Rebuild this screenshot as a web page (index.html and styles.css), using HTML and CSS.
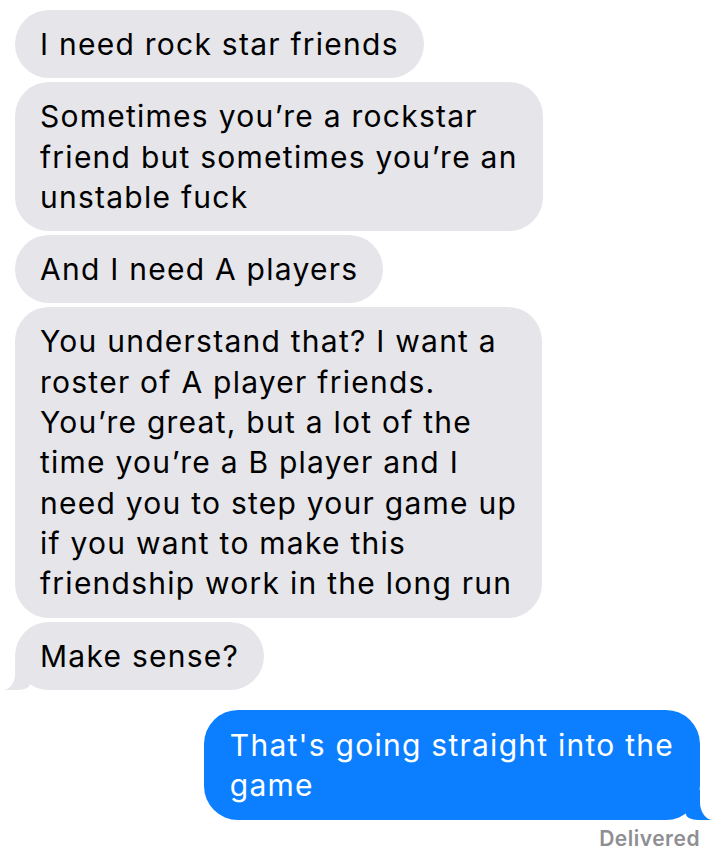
FILE: index.html
```html
<!DOCTYPE html>
<html>
<head>
<meta charset="utf-8">
<link rel="stylesheet" href="styles.css">
</head>
<body>
<div class="thread">
  <div class="bubble recv">I need rock star friends</div>
  <div class="bubble recv">Sometimes you’re a rockstar<br>friend but sometimes you’re an<br>unstable fuck</div>
  <div class="bubble recv">And I need A players</div>
  <div class="bubble recv">You understand that? I want a<br>roster of A player friends.<br>You’re great, but a lot of the<br>time you’re a B player and I<br>need you to step your game up<br>if you want to make this<br>friendship work in the long run</div>
  <div class="bubble recv tail">Make sense?</div>
  <div class="bubble sent tail">That's going straight into the<br>game</div>
  <div class="status">Delivered</div>
</div>
</body>
</html>
```
FILE: styles.css
```css
html, body {
  margin: 0;
  padding: 0;
  background: #ffffff;
}
.thread {
  display: flex;
  flex-direction: column;
  align-items: flex-start;
  gap: 4px;
  padding: 10px 16px 0 15px;
  font-family: "Inter", "Roboto", sans-serif;
}
.bubble {
  position: relative;
  z-index: 0;
  font-size: 30px;
  line-height: 40.3px;
  padding: 14px 25px;
  border-radius: 34px;
  white-space: nowrap;
  letter-spacing: 1.25px;
}
.recv {
  background: #e5e5ea;
  color: #000;
}
.sent {
  background: #0b7fff;
  color: #fff;
  align-self: flex-end;
  margin-top: 16px;
  padding: 15px 26px 15px 26px;
}
.recv.tail::before {
  content: "";
  position: absolute;
  left: -13px;
  bottom: 0;
  width: 28px;
  height: 30px;
  background: #e5e5ea;
  border-bottom-right-radius: 12px 6px;
  z-index: -1;
}
.recv.tail::after {
  content: "";
  position: absolute;
  left: -26px;
  bottom: 0;
  width: 26px;
  height: 34px;
  background: #fff;
  border-bottom-right-radius: 12px 16px;
}
.sent.tail::before {
  content: "";
  position: absolute;
  right: -14px;
  bottom: 0;
  width: 28px;
  height: 30px;
  background: #0b7fff;
  border-bottom-left-radius: 12px 6px;
  z-index: -1;
}
.sent.tail::after {
  content: "";
  position: absolute;
  right: -27px;
  bottom: 0;
  width: 27px;
  height: 34px;
  background: #fff;
  border-bottom-left-radius: 13px 18px;
}
.status {
  align-self: flex-end;
  margin-top: 2px;
  font-size: 21px;
  font-weight: 600;
  letter-spacing: 0.5px;
  color: #8e8e93;
}
```
